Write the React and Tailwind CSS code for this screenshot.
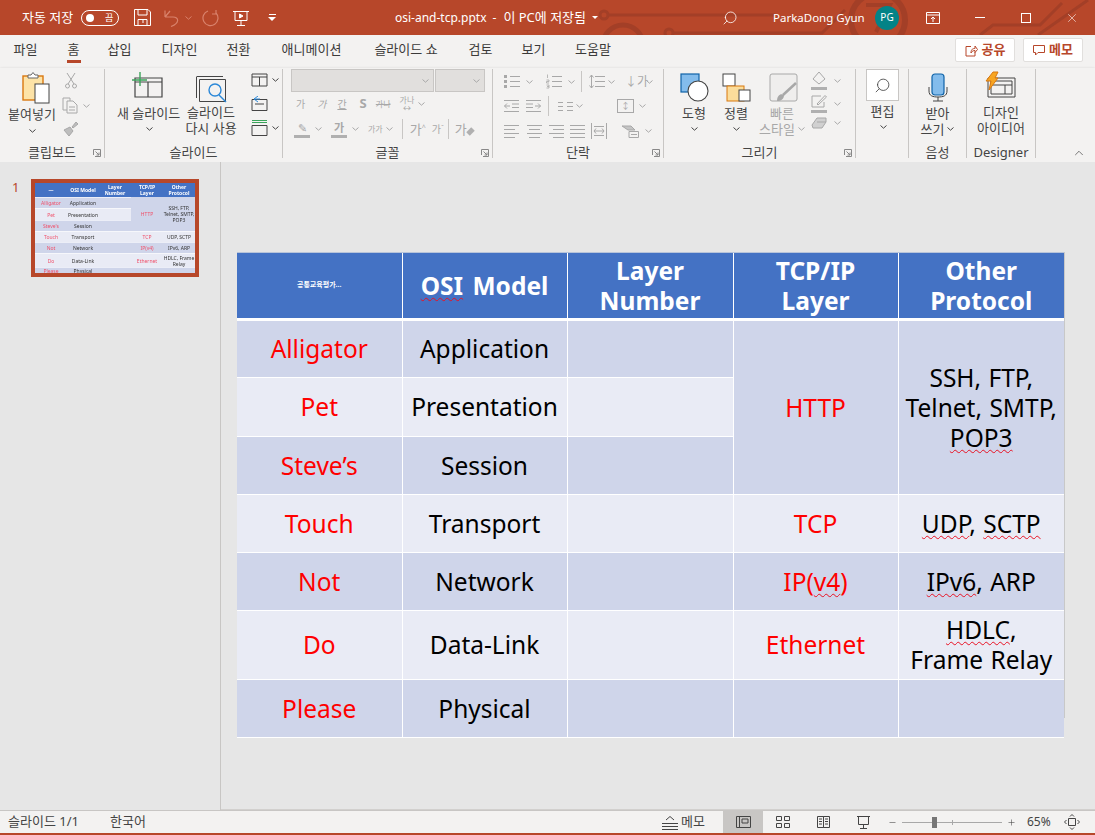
import { ChevronUp, Search, X, Minus, Plus } from "lucide-react";

const KR = "font-['Noto_Sans','Noto_Sans_CJK_KR',sans-serif]";

const Caret = ({ className = "" }) => (
  <svg width="7" height="4" viewBox="0 0 7 4" className={`shrink-0 ${className}`}>
    <path d="M0.5 0.5 L3.5 3.2 L6.5 0.5" fill="none" stroke="currentColor" strokeWidth="1" />
  </svg>
);

const Divider = ({ className = "" }) => <div className={`w-px bg-[#c8c6c4] ${className}`} />;

const GRAY = "#a8a8a8";

const BulletIcon = () => (
  <svg width="16" height="15" viewBox="0 0 16 15" fill="none" stroke={GRAY}>
    <path d="M6 2.5 H16 M6 7.5 H16 M6 12.5 H16" />
    <path d="M0 1 H3 V4 H0 Z M0 6 H3 V9 H0 Z M0 11 H3 V14 H0 Z" fill={GRAY} stroke="none" />
  </svg>
);

const NumberIcon = () => (
  <svg width="16" height="15" viewBox="0 0 16 15" fill="none" stroke={GRAY}>
    <path d="M6 2.5 H16 M6 7.5 H16 M6 12.5 H16" />
    <path d="M1.5 0.5 V4 M0.5 6 H3 V7.5 H0.5 V9 H3 M0.5 11 H3 V14 H0.5 M1 12.5 H3" strokeWidth="0.8" />
  </svg>
);

const LineSpacingIcon = () => (
  <svg width="16" height="15" viewBox="0 0 16 15" fill="none" stroke={GRAY}>
    <path d="M6 2.5 H16 M6 7.5 H16 M6 12.5 H16 M2.5 1 V14 M0.5 3.5 L2.5 1 L4.5 3.5 M0.5 11.5 L2.5 14 L4.5 11.5" />
  </svg>
);

const IndentIcon = ({ flip = false }) => (
  <svg width="15" height="12" viewBox="0 0 15 12" fill="none" stroke={GRAY} style={flip ? { transform: "scaleX(-1)" } : undefined}>
    <path d="M0 0.5 H15 M8 4 H15 M8 7.5 H15 M0 11.5 H15 M6 6 H0.5 M3 3.5 L0.5 6 L3 8.5" />
  </svg>
);

const AlignIcon = ({ kind }) => {
  const d = {
    left: "M0 0.5 H15 M0 4.5 H11 M0 8.5 H15 M0 12.5 H11",
    center: "M0 0.5 H15 M2 4.5 H13 M0 8.5 H15 M2 12.5 H13",
    right: "M0 0.5 H15 M4 4.5 H15 M0 8.5 H15 M4 12.5 H15",
    full: "M0 0.5 H15 M0 4.5 H15 M0 8.5 H15 M0 12.5 H15",
  }[kind];
  return (
    <svg width="15" height="13" viewBox="0 0 15 13" fill="none" stroke={GRAY}>
      <path d={d} />
    </svg>
  );
};

const TitleBar = () => (
  <div className="relative flex h-[35px] items-center bg-[#b7472a] text-white">
    <svg className="absolute inset-0 h-[35px] w-[1095px]" viewBox="0 0 1095 35" fill="none" stroke="#a33f27" strokeWidth="3">
      <circle cx="604" cy="15" r="4" />
      <path d="M608 15 H775" />
      <circle cx="623" cy="45" r="20" strokeWidth="5" />
      <circle cx="669" cy="33" r="4" />
      <path d="M673 33 H822 L845 10" />
      <circle cx="878" cy="20" r="27" strokeWidth="6" />
      <path d="M866 5 H890 L876 32" strokeWidth="4" />
      <path d="M980 35 L993 25 H1040 L1062 3 M1038 35 L1088 0" />
    </svg>
    <div className="relative flex items-center">
      <span className="ml-[22px] w-[58px] text-[13px] leading-none whitespace-nowrap">자동 저장</span>
      <div className="ml-[1px] flex h-[16px] w-[38px] items-center rounded-full border border-white pl-[4px]">
        <div className="h-[8px] w-[8px] rounded-full bg-white" />
        <span className="ml-[11px] text-[9px] leading-none">끔</span>
      </div>
      <svg className="ml-[15px]" width="17" height="17" viewBox="0 0 17 17" fill="none" stroke="white">
        <path d="M0.5 0.5 H14 L16.5 3 V16.5 H0.5 Z M4 0.5 V6 H13 V0.5 M4 16.5 V10.5 H13 V16.5 M9 10.5 V14" />
      </svg>
      <svg className="ml-[13px]" width="17" height="18" viewBox="0 0 17 18" fill="none" stroke="#d9826c" strokeWidth="1.2">
        <path d="M1 8 L6 2 M1 8 H9 C15 8 16 14 7 17.5 M1 1.5 V8" />
      </svg>
      <Caret className="ml-[4px] text-[#d9826c]" />
      <svg className="ml-[10px]" width="18" height="18" viewBox="0 0 18 18" fill="none" stroke="#d9826c" strokeWidth="1.2">
        <path d="M6 2 A7.5 7.5 0 1 0 14 4 M14 1 V5 H10" />
      </svg>
      <svg className="ml-[13px]" width="16" height="18" viewBox="0 0 16 18" fill="none" stroke="white">
        <path d="M0 2.5 H16 M2 2.5 V11.5 H14 V2.5 M8 11.5 V16 M4 16.5 H12" />
        <path d="M6.5 5 L10 7 L6.5 9 Z" fill="white" />
      </svg>
      <div className="ml-[19px] flex w-[8px] flex-col items-center">
        <div className="mb-[2px] h-px w-[7px] bg-white" />
        <div className="h-0 w-0 border-x-[4px] border-t-[4px] border-x-transparent border-t-white" />
      </div>
    </div>
    <div className="relative ml-[119px] flex w-[200px] items-center text-[12px] whitespace-nowrap">
      <span>osi-and-tcp.pptx</span>
      <span className="ml-[6px]">-</span>
      <span className="ml-[7px] text-[13px]">이 PC에 저장됨</span>
      <div className="ml-[6px] h-0 w-0 border-x-[3px] border-t-[3px] border-x-transparent border-t-white" />
    </div>
    <Search className="relative ml-[127px]" size={16} strokeWidth={1.2} style={{ transform: "scaleX(-1)" }} />
    <span className="relative ml-[35px] w-[91px] text-[11.5px] whitespace-nowrap">ParkaDong Gyun</span>
    <div className="relative ml-[11px] flex h-[24px] w-[24px] items-center justify-center rounded-full bg-[#038387] text-[10px]">PG</div>
    <svg className="relative ml-[27px]" width="14" height="12" viewBox="0 0 14 12" fill="none" stroke="white">
      <path d="M0.5 0.5 H13.5 V11.5 H0.5 Z M0.5 3 H13.5 M7 10 V5 M5 7 L7 5 L9 7" />
    </svg>
    <div className="relative ml-[35px] h-px w-[10px] bg-white" />
    <div className="relative ml-[36px] h-[10px] w-[10px] border border-white" />
    <X className="relative ml-[34px]" size={14} strokeWidth={1} />
  </div>
);

const tabs = [
  ["파일", 13, 25],
  ["홈", 29, 13],
  ["삽입", 27, 25],
  ["디자인", 29, 37],
  ["전환", 28, 25],
  ["애니메이션", 29, 63],
  ["슬라이드 쇼", 28, 70],
  ["검토", 27, 25],
  ["보기", 28, 25],
  ["도움말", 28, 38],
];

const TabBar = () => (
  <div className="flex h-[33px] items-start bg-[#f3f2f1]">
    {tabs.map(([t, ml, w]) => (
      <div key={t} className="relative h-[28px]" style={{ marginLeft: ml, width: w }}>
        <span className="flex justify-center pt-[5px] text-[13px] leading-[18px] whitespace-nowrap text-[#3b3a39]">{t}</span>
        {t === "홈" && <div className="absolute top-[25px] left-0 h-[3px] w-[14px] bg-[#b7472a]" />}
      </div>
    ))}
    <div className="ml-auto flex pt-[3px] pr-[12px]">
      <div className="flex h-[24px] w-[60px] items-center justify-center gap-[4px] rounded-[2px] border border-[#e1dfdd] bg-white text-[13px] font-bold text-[#b7472a]">
        <svg width="13" height="13" viewBox="0 0 13 13" fill="none" stroke="#b7472a">
          <path d="M6 2.5 H1 V12 H10 V8 M6 9 C6 5 8 4.5 10 4.5 V2 L12.5 5.5 L10 8.5 V6.5 C8.5 6.5 7 7 6 9 Z" />
        </svg>
        공유
      </div>
      <div className="ml-[8px] flex h-[24px] w-[60px] items-center justify-center gap-[4px] rounded-[2px] border border-[#e1dfdd] bg-white text-[13px] font-bold text-[#b7472a]">
        <svg width="12" height="12" viewBox="0 0 12 12" fill="none" stroke="#b7472a">
          <path d="M0.5 1.5 H11.5 V8.5 H5 L2.5 11 V8.5 H0.5 Z" />
        </svg>
        메모
      </div>
    </div>
  </div>
);

const Group = ({ w, label, launcher, children }) => (
  <div className="relative flex h-[89px] shrink-0 flex-col border-r border-[#c8c6c4]" style={{ width: w }}>
    <div className="h-[75px] shrink-0">{children}</div>
    <div className="text-center text-[13px] leading-[17px] whitespace-nowrap text-[#444]">{label}</div>
    {launcher && (
      <svg className="absolute right-[3px] bottom-[1px]" width="8" height="8" viewBox="0 0 8 8" fill="none" stroke="#888">
        <path d="M0.5 6 V0.5 H7.5 V7.5 H2 M2.5 2.5 L6 6 M6 3.5 V6 H3.5" />
      </svg>
    )}
  </div>
);

const Label = ({ children, className = "" }) => (
  <div className={`flex justify-center text-[13px] leading-[16px] whitespace-nowrap text-[#444] ${className}`}>{children}</div>
);

const Ribbon = () => (
  <div className="flex h-[94px] items-start bg-[#f3f2f1] pt-[1px] shadow-[0_1px_3px_rgba(0,0,0,0.22)]">
    <Group w={105} label="클립보드" launcher>
      <div className="flex">
        <div className="w-[65px] pt-[3px]">
          <svg className="ml-[22px]" width="28" height="32" viewBox="0 0 28 32">
            <rect x="1" y="4" width="20" height="24" fill="#fde3a7" stroke="#d9780f" strokeWidth="1.4" />
            <path d="M6 6 V3 H9 L11 0.5 L13 3 H16 V6 Z" fill="white" stroke="#666" />
            <rect x="13" y="12" width="14" height="19" fill="white" stroke="#444" />
          </svg>
          <Label className="mt-[2px] ml-[-1px]">붙여넣기</Label>
          <Caret className="mx-auto mt-[7px] text-[#444]" />
        </div>
        <div className="flex flex-col items-start gap-[7px] pt-[3px] text-[#a8a8a8]">
          <svg width="12" height="17" viewBox="0 0 12 17" fill="none" stroke={GRAY}>
            <path d="M2 1 L9 12 M10 1 L3 12" />
            <circle cx="2.5" cy="14" r="2" />
            <circle cx="9.5" cy="14" r="2" />
          </svg>
          <div className="mt-[1px] ml-[-3px] flex items-center gap-[4px]">
            <svg width="17" height="17" viewBox="0 0 17 17" fill="none" stroke={GRAY}>
              <path d="M1 1 H8 V4 M1 1 V13 H5" />
              <path d="M5 4 H11 L15 8 V16 H5 Z M7 10 H13 M7 13 H13" />
            </svg>
            <Caret />
          </div>
          <svg className="ml-[-2px]" width="16" height="16" viewBox="0 0 16 16" fill="#bdbdbd" stroke={GRAY}>
            <path d="M9 6 L13 1 L15 3 L10 7 Z M1 9 L7 6 L10 10 L6 15 Z" />
          </svg>
        </div>
      </div>
    </Group>
    <Group w={178} label="슬라이드">
      <div className="flex">
        <div className="w-[76px] pt-[2px]">
          <svg className="ml-[27px]" width="31" height="28" viewBox="0 0 31 28" fill="none">
            <path d="M3 7 H30 V26 H3 Z M3 11 H30 M16 11 V26" stroke="#444" strokeWidth="1.2" />
            <path d="M8 1 V15 M0 9 H15" stroke="#3aa45a" strokeWidth="1.4" />
          </svg>
          <Label className="mt-[6px] ml-[11px]">새 슬라이드</Label>
          <Caret className="mt-[6px] ml-[41px] text-[#444]" />
        </div>
        <div className="w-[70px] pt-[7px]">
          <svg className="ml-[15px]" width="32" height="27" viewBox="0 0 32 27" fill="none">
            <path d="M1 0.5 H27 M0.5 0.5 V22 M3.5 3.5 H29.5 V25.5 H3.5 Z" stroke="#444" />
            <circle cx="19" cy="14" r="6" fill="#f3f2f1" stroke="#2b88d8" strokeWidth="1.4" />
            <path d="M23 19 L30 26" stroke="#2b88d8" strokeWidth="1.4" />
          </svg>
          <Label className="mt-[1px] ml-[-10px]">슬라이드</Label>
          <Label className="ml-[-10px]">다시 사용</Label>
        </div>
        <div className="flex flex-col gap-[9px] pt-[4px] text-[#444]">
          <div className="flex items-center gap-[4px]">
            <svg width="17" height="14" viewBox="0 0 17 14" fill="none" stroke="#444"><path d="M1 1 H16 V13 H1 Z M1 4 H16 M8.5 4 V13" /></svg>
            <Caret />
          </div>
          <svg width="17" height="15" viewBox="0 0 17 15" fill="none" stroke="#444">
            <path d="M1 3.5 H16 V14.5 H1 Z M4 8 H13" />
            <path d="M7 0 L3 3 L7 6 M3 3 H9" stroke="#2b88d8" />
          </svg>
          <div className="flex items-center gap-[4px]">
            <svg width="17" height="16" viewBox="0 0 17 16" fill="none">
              <path d="M1 0.5 H16 M1 2.5 H16" stroke="#3aa45a" />
              <path d="M1 5.5 H16 V15.5 H1 Z" stroke="#444" />
            </svg>
            <Caret />
          </div>
        </div>
      </div>
    </Group>
    <Group w={210} label="글꼴" launcher>
      <div className="pl-[8px] text-[#a8a8a8]">
        <div className="flex h-[23px]">
          <div className="flex w-[143px] items-center justify-end border border-[#c8c6c4] bg-[#e1dfdd] pr-[4px]"><Caret /></div>
          <div className="ml-px flex w-[50px] items-center justify-end border border-[#c8c6c4] bg-[#e1dfdd] pr-[4px]"><Caret /></div>
        </div>
        <div className="mt-[3px] flex h-[18px] items-center text-[10px] whitespace-nowrap text-[#a8a8a8]">
          <span className="ml-[5px]">가</span>
          <span className="ml-[12px] italic">가</span>
          <span className="ml-[11px] underline">간</span>
          <span className="ml-[13px] text-[13px] font-bold">S</span>
          <span className="ml-[9px] text-[8px] line-through">가나</span>
          <span className="ml-[9px] text-center text-[8px] leading-[8px]">가나<br />↔</span>
          <Caret className="ml-[4px]" />
        </div>
        <div className="mt-[6px] flex h-[20px] items-center whitespace-nowrap text-[#a8a8a8]">
          <div className="ml-[3px] w-[16px] border-b-[3px] border-[#b0b0b0] text-center text-[11px] leading-[14px]">✎</div>
          <Caret className="ml-[5px]" />
          <div className="ml-[9px] w-[16px] border-b-[3px] border-[#b0b0b0] text-center text-[11px] leading-[14px] font-bold">가</div>
          <Caret className="ml-[5px]" />
          <span className="ml-[9px] text-[8px]">가가</span>
          <Caret className="ml-[3px]" />
          <Divider className="ml-[9px] h-[20px]" />
          <span className="ml-[7px] text-[13px] leading-none">가<sup className="text-[7px]">^</sup></span>
          <span className="ml-[6px] text-[10px] leading-none">가<sup className="text-[7px]">ˇ</sup></span>
          <Divider className="ml-[4px] h-[20px]" />
          <span className="ml-[6px] text-[13px] leading-none">가</span>
          <span className="mt-[4px] h-[5px] w-[7px] -rotate-45 bg-[#b0b0b0]" />
        </div>
      </div>
    </Group>
    <Group w={171} label="단락" launcher>
      <div className="pt-[3px] pl-[11px] text-[#a8a8a8]">
        <div className="flex h-[19px] items-center">
          <BulletIcon />
          <Caret className="ml-[6px]" />
          <div className="ml-[13px]"><NumberIcon /></div>
          <Caret className="ml-[6px]" />
          <Divider className="ml-[6px] h-[21px]" />
          <div className="ml-[7px]"><LineSpacingIcon /></div>
          <Caret className="ml-[3px]" />
          <span className="ml-[10px] w-[16px] text-[12px] leading-none whitespace-nowrap">↓가</span>
          <Caret className="ml-[5px]" />
        </div>
        <div className="mt-[5px] flex h-[20px] items-center">
          <IndentIcon />
          <div className="ml-[7px]"><IndentIcon flip /></div>
          <Divider className="ml-[7px] h-[20px]" />
          <svg className="ml-[9px]" width="15" height="9" viewBox="0 0 15 9" fill="none" stroke={GRAY}>
            <path d="M0 0.5 H5 M0 4.5 H5 M0 8.5 H5 M9 0.5 H15 M9 4.5 H15 M9 8.5 H15" />
          </svg>
          <Caret className="ml-[3px]" />
          <div className="ml-[34px] flex h-[14px] w-[17px] items-center justify-center border border-[#a8a8a8] text-[9px]">↕</div>
          <Caret className="ml-[5px]" />
        </div>
        <div className="mt-[5px] flex h-[20px] items-center">
          <AlignIcon kind="left" />
          <div className="ml-[8px]"><AlignIcon kind="center" /></div>
          <div className="ml-[7px]"><AlignIcon kind="right" /></div>
          <div className="ml-[6px]"><AlignIcon kind="full" /></div>
          <svg className="ml-[6px]" width="16" height="16" viewBox="0 0 16 16" fill="none" stroke={GRAY}>
            <path d="M0.5 0 V16 M15.5 0 V16 M3 3.5 H13 M3 12.5 H13 M3 8 H13 M5 5.5 L3 8 L5 10.5 M11 5.5 L13 8 L11 10.5" />
          </svg>
          <svg className="ml-[15px]" width="17" height="13" viewBox="0 0 17 13" fill="none" stroke={GRAY}>
            <path d="M0 1 H9 L13 5 H6 Z" fill="#c4c4c4" />
            <path d="M7 6.5 H16.5 V12.5 H7 Z M9 9.5 H15" />
          </svg>
          <Caret className="ml-[6px]" />
        </div>
      </div>
    </Group>
    <Group w={192} label="그리기" launcher>
      <div className="flex">
        <div className="ml-[16px] w-[28px] pt-[4px]">
          <svg width="29" height="29" viewBox="0 0 29 29">
            <rect x="1" y="1" width="18" height="18" fill="#83bcec" stroke="#0f63a8" strokeWidth="1.2" />
            <circle cx="18" cy="18" r="10" fill="white" stroke="#444" strokeWidth="1.1" />
          </svg>
          <Label className="mt-[3px]">도형</Label>
          <Caret className="mx-auto mt-[6px] text-[#444]" />
        </div>
        <div className="ml-[14px] w-[28px] pt-[4px]">
          <svg width="29" height="29" viewBox="0 0 29 29">
            <rect x="1" y="1" width="12" height="12" fill="white" stroke="#444" />
            <rect x="5" y="13" width="17" height="15" fill="#fbdd9b" stroke="#d9780f" />
            <rect x="17" y="17" width="11" height="11" fill="white" stroke="#444" />
          </svg>
          <Label className="mt-[3px]">정렬</Label>
          <Caret className="mx-auto mt-[6px] text-[#444]" />
        </div>
        <div className="ml-[9px] w-[46px] pt-[4px]">
          <svg className="ml-[10px]" width="29" height="29" viewBox="0 0 29 29" fill="none">
            <rect x="1" y="1" width="27" height="27" rx="2" fill="#efeeed" stroke={GRAY} />
            <path d="M27 10 L14 22" stroke={GRAY} strokeWidth="2.5" />
            <path d="M8 28 C8 22 12 20 15 22 C15 26 12 28 8 28 Z" fill={GRAY} />
          </svg>
          <Label className="mt-[3px] text-[#a8a8a8]">빠른</Label>
          <Label className="items-center text-[#a8a8a8]">스타일<Caret className="ml-[3px]" /></Label>
        </div>
        <div className="ml-[6px] flex flex-col gap-[4px] pt-[2px] text-[#a8a8a8]">
          <div className="flex items-center gap-[7px]">
            <svg width="16" height="19" viewBox="0 0 16 19" fill="none" stroke={GRAY}>
              <path d="M8 1 L14 8 L8 13 L2 8 Z" />
              <path d="M0 17.5 H16" strokeWidth="3" stroke="#b0b0b0" />
            </svg>
            <Caret />
          </div>
          <div className="flex items-center gap-[7px]">
            <svg width="16" height="19" viewBox="0 0 16 19" fill="none" stroke={GRAY}>
              <path d="M1 2 H10 M1 2 V13 H13 V8 M6 10 L14 1.5 L15.5 3 L7 11 Z" />
              <path d="M0 17.5 H16" strokeWidth="3" stroke="#b0b0b0" />
            </svg>
            <Caret />
          </div>
          <div className="flex items-center gap-[7px]">
            <svg width="16" height="12" viewBox="0 0 16 12" fill="#d0d0d0" stroke={GRAY}>
              <path d="M1 8 L6 1 H15 V5 L11 11 H2 Z M6 5 H15" />
            </svg>
            <Caret />
          </div>
        </div>
      </div>
    </Group>
    <Group w={53} label="">
      <div className="pl-[10px]">
        <div className="flex h-[32px] w-[33px] items-center justify-center border border-[#c8c6c4] bg-white text-[#444]">
          <Search size={17} strokeWidth={1.2} style={{ transform: "scaleX(-1)" }} />
        </div>
        <Label className="mt-[2px] w-[33px]">편집</Label>
        <Caret className="mt-[6px] ml-[14px] text-[#444]" />
      </div>
    </Group>
    <Group w={58} label="음성">
      <div className="pt-[4px] text-center">
        <svg className="mx-auto" width="20" height="29" viewBox="0 0 20 29" fill="none">
          <rect x="4" y="1" width="12" height="21" rx="3" fill="#83bcec" stroke="#0f63a8" strokeWidth="1.2" />
          <path d="M1 14 V18 C1 23 5 24 10 24 C15 24 19 23 19 18 V14 M10 24 V28 M5 28 H15" stroke="#444" />
        </svg>
        <Label className="mt-[3px]">받아</Label>
        <Label className="items-center">쓰기<Caret className="ml-[3px]" /></Label>
      </div>
    </Group>
    <Group w={69} label="Designer">
      <div className="pt-[2px]">
        <svg className="ml-[18px]" width="31" height="28" viewBox="0 0 31 28" fill="none">
          <path d="M3 7 H30 V26 H3 Z M6 10 H27 V23 H6 Z M6 14 H27 M20 14 V23" stroke="#444" />
          <path d="M8 1 H13 L10 7 H13 L4 19 L6 10 H1 Z" fill="#f7a521" stroke="#d9780f" />
        </svg>
        <Label className="mt-[5px]">디자인</Label>
        <Label>아이디어</Label>
      </div>
    </Group>
    <div className="flex h-[91px] flex-1 items-end justify-end pr-[9px] text-[#444]">
      <ChevronUp size={14} strokeWidth={1.2} />
    </div>
  </div>
);

const Squiggle = ({ children }) => (
  <span className="underline decoration-[#e81123] decoration-wavy decoration-1 underline-offset-[2px]">{children}</span>
);

const rows = [
  { a: "Alligator", b: "Application", h: 58, light: false },
  { a: "Pet", b: "Presentation", h: 59, light: true },
  { a: "Steve’s", b: "Session", h: 58, light: false },
  { a: "Touch", b: "Transport", h: 58, light: true, d: "TCP", e: <><Squiggle>UDP</Squiggle>, <Squiggle>SCTP</Squiggle></> },
  { a: "Not", b: "Network", h: 58, light: false, d: <>IP(<Squiggle>v4</Squiggle>)</>, e: <><Squiggle>IPv6</Squiggle>, ARP</> },
  { a: "Do", b: "Data-Link", h: 69, light: true, d: "Ethernet", e: <><Squiggle>HDLC</Squiggle>,<br />Frame Relay</> },
  { a: "Please", b: "Physical", h: 58, light: false, d: "", e: "" },
];

const DARK = "bg-[#cfd5ea]";
const LIGHT = "bg-[#e9ebf5]";

const SlideTable = () => (
  <div className="relative">
    <table className="w-[827px] table-fixed border-collapse text-center text-[24.5px] leading-[30px] [word-spacing:1px] text-black">
      <colgroup>
        <col className="w-[165px]" />
        <col className="w-[165px]" />
        <col className="w-[166px]" />
        <col className="w-[165px]" />
        <col className="w-[166px]" />
      </colgroup>
      <thead>
        <tr className="h-[67px] border-b-[3px] border-white bg-[#4472c4] font-bold text-white">
          <th className="border-r border-white text-[7px] leading-none font-bold">공통교육평가...</th>
          <th className="border-r border-white pt-[2px] [word-spacing:3px]"><Squiggle>OSI</Squiggle> Model</th>
          <th className="border-r border-white pt-[2px] font-bold">Layer<br />Number</th>
          <th className="border-r border-white pt-[2px] font-bold">TCP/IP<br />Layer</th>
          <th className="pt-[2px] font-bold">Other<br />Protocol</th>
        </tr>
      </thead>
      <tbody>
        {rows.map((r, i) => (
          <tr key={r.a} style={{ height: r.h }} className={`border-b border-white ${r.light ? LIGHT : DARK}`}>
            <td className="border-r border-white pt-[1px] text-[#ff0000]">{r.a}</td>
            <td className="border-r border-white pt-[1px]">{r.b}</td>
            <td className="border-r border-white"></td>
            {i === 0 && <td rowSpan={3} className={`border-r border-white pt-[1px] text-[#ff0000] ${DARK}`}>HTTP</td>}
            {i === 0 && <td rowSpan={3} className={`pt-[1px] ${DARK}`}>SSH, FTP,<br />Telnet, SMTP,<br /><Squiggle>POP3</Squiggle></td>}
            {i > 2 && <td className="border-r border-white pt-[1px] text-[#ff0000]">{r.d}</td>}
            {i > 2 && <td className="pt-[1px]">{r.e}</td>}
          </tr>
        ))}
      </tbody>
    </table>
    <div className="absolute top-0 left-0 h-px w-[828px] bg-[#b8c4da]" />
    <div className="absolute top-0 left-[827px] h-[466px] w-px bg-[#c8c8c8]" />
  </div>
);

const miniRows = [
  ["Alligator", "Application", 11, false],
  ["Pet", "Presentation", 12, true],
  ["Steve's", "Session", 11, false],
  ["Touch", "Transport", 11, true, "TCP", "UDP, SCTP"],
  ["Not", "Network", 11, false, "IP(v4)", "IPv6, ARP"],
  ["Do", "Data-Link", 14, true, "Ethernet", "HDLC, Frame Relay"],
  ["Please", "Physical", 7, false, "", ""],
];

const Thumb = () => (
  <div className="h-[98px] w-[168px] overflow-hidden border-[4px] border-[#b7472a] bg-[#e6e6e6]">
    <div className="overflow-hidden text-center text-[5px] leading-[6px] text-[#333] blur-[0.3px]">
      <div className="grid h-[14px] grid-cols-5 items-center bg-[#4472c4] font-bold text-white">
        <span>—</span><span>OSI Model</span><span>Layer<br />Number</span><span>TCP/IP<br />Layer</span><span>Other<br />Protocol</span>
      </div>
      <div className="relative">
        {miniRows.map(([a, b, h, light, d, e]) => (
          <div key={a} className={`grid grid-cols-5 items-center border-t border-white/60 ${light ? LIGHT : DARK}`} style={{ height: h }}>
            <span className="text-[#f0506a]">{a}</span>
            <span>{b}</span>
            <span></span>
            <span className="text-[#f0506a]">{d}</span>
            <span>{e}</span>
          </div>
        ))}
        <div className={`absolute top-0 right-0 grid h-[34px] w-[64px] grid-cols-2 items-center ${DARK}`}>
          <span className="text-[#f0506a]">HTTP</span>
          <span>SSH, FTP, Telnet, SMTP, POP3</span>
        </div>
      </div>
    </div>
  </div>
);

const Workspace = () => (
  <div className="flex h-[648px] bg-[#e6e6e6]">
    <div className="flex w-[221px] shrink-0 items-start border-r border-[#c8c6c4] pt-[17px] pl-[12px]">
      <span className="w-[19px] text-[13px] leading-[17px] text-[#b7472a]">1</span>
      <Thumb />
    </div>
    <div className="flex-1 border-b border-[#d2d0ce] pt-[90px] pl-[16px]">
      <SlideTable />
    </div>
  </div>
);

const StatusBar = () => (
  <div className="flex h-[25px] items-center border-t border-b-2 border-t-[#c8c6c4] border-b-[#b7472a] bg-[#f3f2f1] text-[13px] text-[#444]">
    <span className="ml-[8px] w-[102px] whitespace-nowrap">슬라이드 1/1</span>
    <span className="w-[552px] whitespace-nowrap">한국어</span>
    <svg width="16" height="15" viewBox="0 0 16 15" fill="none" stroke="#444">
      <path d="M0 8.5 H16 M0 11.5 H16 M0 14.5 H16 M4 5 L8 1.5 L12 5" />
    </svg>
    <span className="ml-[3px] w-[42px]">메모</span>
    <div className="flex h-[22px] w-[40px] items-center justify-center bg-[#c8c6c4]">
      <svg width="15" height="12" viewBox="0 0 15 12" fill="none" stroke="#444"><path d="M0.5 0.5 H14.5 V11.5 H0.5 Z M3.5 0.5 V11.5 M6 3 H12 V7 H6 Z" /></svg>
    </div>
    <div className="flex w-[40px] justify-center">
      <svg width="14" height="12" viewBox="0 0 14 12" fill="none" stroke="#444"><path d="M0.5 0.5 H5.5 V4.5 H0.5 Z M8.5 0.5 H13.5 V4.5 H8.5 Z M0.5 7.5 H5.5 V11.5 H0.5 Z M8.5 7.5 H13.5 V11.5 H8.5 Z" /></svg>
    </div>
    <div className="flex w-[40px] justify-center">
      <svg width="13" height="12" viewBox="0 0 13 12" fill="none" stroke="#444"><path d="M0.5 0.5 H6.5 V11.5 H0.5 Z M6.5 0.5 H12.5 V11.5 H6.5 Z M2 3 H5 M2 5.5 H5 M2 8 H5 M8 3 H11 M8 5.5 H11 M8 8 H11" /></svg>
    </div>
    <div className="flex w-[40px] justify-center">
      <svg width="13" height="13" viewBox="0 0 13 13" fill="none" stroke="#444"><path d="M0 0.5 H13 M1.5 0.5 V8.5 H11.5 V0.5 M6.5 8.5 V12.5 M3 12.5 H10" /></svg>
    </div>
    <Minus className="ml-[5px]" size={9} strokeWidth={1.5} />
    <div className="relative mx-[5px] flex h-[11px] w-[100px] items-center">
      <div className="h-px w-full bg-[#a8a8a8]" />
      <div className="absolute left-1/2 h-[5px] w-px bg-[#a8a8a8]" />
      <div className="absolute left-[30px] h-[11px] w-[5px] bg-[#767676]" />
    </div>
    <Plus size={9} strokeWidth={1.5} />
    <span className="ml-[11px] w-[37px] text-[12px]">65%</span>
    <svg width="16" height="16" viewBox="0 0 16 16" fill="none" stroke="#444">
      <path d="M4.5 4.5 H11.5 V11.5 H4.5 Z M6 2.5 L8 0.5 L10 2.5 M6 13.5 L8 15.5 L10 13.5 M2.5 6 L0.5 8 L2.5 10 M13.5 6 L15.5 8 L13.5 10" />
    </svg>
  </div>
);

export default function App() {
  return (
    <div className={`flex h-[835px] w-[1095px] flex-col overflow-hidden bg-[#e6e6e6] ${KR}`}>
      <TitleBar />
      <TabBar />
      <Ribbon />
      <Workspace />
      <StatusBar />
    </div>
  );
}
